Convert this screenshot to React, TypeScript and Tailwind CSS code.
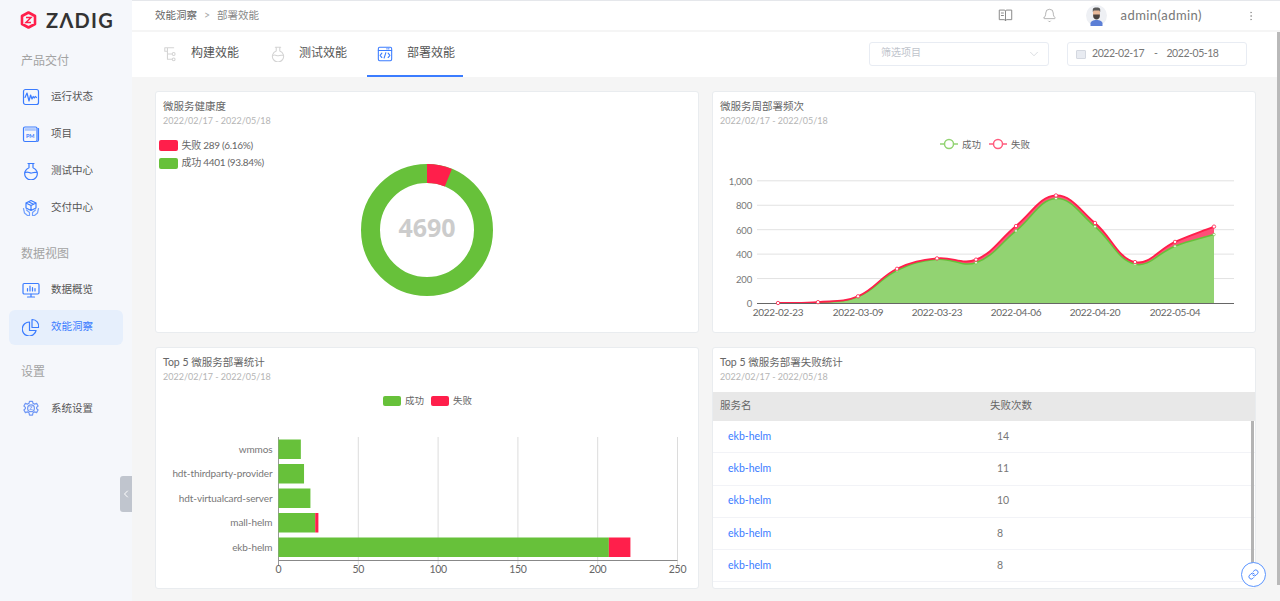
import React from 'react';
import { Bell, ChevronDown, ChevronLeft, Link, MoreVertical } from 'lucide-react';

const GREEN = '#67c13a';
const RED = '#ff1f4b';
const BLUE = '#3b7cff';
const FONT = "Lato,'Noto Sans CJK SC',sans-serif";

const Icon: React.FC<{ children: React.ReactNode; color?: string; size?: number }> = ({ children, color = BLUE, size = 18 }) => (
  <svg width={size} height={size} viewBox="0 0 18 18" fill="none" stroke={color} strokeWidth="1.2" strokeLinecap="round" strokeLinejoin="round">
    {children}
  </svg>
);

const PulseIcon = () => (
  <Icon>
    <rect x="1.5" y="1.5" width="15" height="15" rx="2" />
    <path d="M3 9.5 5 5l2 8 1.6-6 1.4 4 1.2-2.5 1 1.5 1-1.5 1.3 1" />
  </Icon>
);

const ProjectIcon = () => (
  <Icon>
    <path d="M16 3.5h.5V15a1.5 1.5 0 0 1-1.5 1.5" />
    <rect x="1.5" y="2" width="13.5" height="14.5" rx="1.5" />
    <rect x="2.8" y="3.2" width="11" height="2.6" fill={BLUE} fillOpacity="0.4" stroke="none" />
    <text x="8.2" y="13" textAnchor="middle" fontSize="5.5" fontWeight="700" fill={BLUE} stroke="none">PM</text>
  </Icon>
);

const FlaskIcon = ({ color = BLUE, size = 18 }: { color?: string; size?: number }) => (
  <Icon color={color} size={size}>
    <path d="M6 1.5h6M7 1.5v4.2a6.3 6.3 0 1 0 4 0V1.5" />
    <path d="M3.5 10.5c2.5-1.5 4 1 6 .5s3-1 5-.5" />
  </Icon>
);

const DeliveryIcon = () => (
  <Icon>
    <path d="M9 1.5 14 4v5l-5 2.5L4 9V4zM4 4l5 2.5L14 4M9 6.5v5M6.5 2.8l5 2.5" />
    <path d="M1.5 9.5 2.5 14l3 2.5h2v-3L4.5 11M16.5 9.5l-1 4.5-3 2.5h-2v-3l3-2.5" opacity="0.7" />
  </Icon>
);

const MonitorIcon = () => (
  <Icon>
    <rect x="1" y="2.5" width="16" height="10.5" rx="1.2" />
    <path d="M9 13v2.5M5.5 16h7M5.5 10V7.5M8 10V5M10.5 10V6.5M13 10V7.5" />
  </Icon>
);

const PieIcon = () => (
  <Icon>
    <path d="M7.5 4a7 7 0 1 0 6.6 8.5H7.5z" />
    <path d="M10 1.5a6.5 6.5 0 0 1 6.5 8H10z" />
  </Icon>
);

const GearIcon = () => (
  <Icon color="#6f97f5">
    <path d="M7.5 1.3h3l.5 2 1.6.8 2-.7 1.5 2.6-1.5 1.4v1.2l1.5 1.4-1.5 2.6-2-.7-1.6.8-.5 2.4h-3l-.5-2.4-1.6-.8-2 .7-1.5-2.6L3.4 8.6V7.4L1.9 6l1.5-2.6 2 .7L7 3.3z" />
    <circle cx="9" cy="8.2" r="3.4" />
    <path d="M7.8 6.8h2.4L7.8 9.6h2.4" strokeWidth="0.8" />
  </Icon>
);

const BuildIcon = () => (
  <Icon color="#d4d4d4" size={16}>
    <path d="M2 2h10M2 2v4h3M5 2v13h5M5 9h5" />
    <circle cx="12" cy="9" r="1.6" />
    <circle cx="12" cy="15" r="1.6" />
  </Icon>
);

const CodeIcon = () => (
  <Icon size={16}>
    <rect x="1.5" y="1.5" width="15" height="15" rx="1.5" />
    <path d="M1.5 5h15" />
    <path d="M5.5 8 3.5 10.5l2 2.5M12.5 8l2 2.5-2 2.5M10 7.5 8 13.5" />
    <path d="M11 3.2h.5M13 3.2h.5" />
  </Icon>
);

const BookIcon = () => (
  <Icon color="#8a8a8a" size={15}>
    <path d="M2 2.5h5.5c.9 0 1.5.6 1.5 1.5v11.5c0-.9-.6-1.5-1.5-1.5H2zM16 2.5h-5.5C9.6 2.5 9 3.1 9 4v11.5c0-.9.6-1.5 1.5-1.5H16z" />
    <path d="M4 6h2.5M4 9h2.5" />
  </Icon>
);

const Avatar = () => (
  <svg width="21" height="21" viewBox="0 0 21 21">
    <circle cx="10.5" cy="10.5" r="10.5" fill="#eef0f4" />
    <path d="M4.5 21v-2.5c0-2 2.5-3.5 6-3.5s6 1.5 6 3.5V21z" fill="#5c7fd6" />
    <rect x="7" y="4" width="7" height="9" rx="3" fill="#e8b99a" />
    <path d="M6.8 7V4.5c0-1.500 1.500-2 3.700-2s3.700.5 3.700 2V7l-1-1.500H7.800z" fill="#5a5a5a" />
    <path d="M7.200 9.500h6.600v1.500c0 2-1.500 3.500-3.300 3.500S7.200 13 7.200 11z" fill="#4a4340" />
  </svg>
);

const ZadigLogo = () => (
  <svg width="17" height="18" viewBox="0 0 17 18" fill="none">
    <path d="M8.500 1.500 15 5v8l-6.500 3.500L2 13V5z" stroke={RED} strokeWidth="2.600" strokeLinejoin="round" />
    <path d="M6 6.500h5L6 11.500h5" stroke={RED} strokeWidth="1.500" />
  </svg>
);

// chart.js style bezier through the points, tension 0.4
const smoothPath = (pts: number[][]) => {
  let d = `M${pts[0][0]} ${pts[0][1]}`;
  const ctrl = (i: number) => {
    const p0 = pts[Math.max(i - 1, 0)], p1 = pts[i], p2 = pts[Math.min(i + 1, pts.length - 1)];
    const d01 = Math.hypot(p1[0] - p0[0], p1[1] - p0[1]);
    const d12 = Math.hypot(p2[0] - p1[0], p2[1] - p1[1]);
    const sum = d01 + d12 || 1;
    const fa = (0.4 * d01) / sum, fb = (0.4 * d12) / sum;
    return {
      prev: [p1[0] - fa * (p2[0] - p0[0]), p1[1] - fa * (p2[1] - p0[1])],
      next: [p1[0] + fb * (p2[0] - p0[0]), p1[1] + fb * (p2[1] - p0[1])],
    };
  };
  for (let i = 0; i < pts.length - 1; i++) {
    const a = ctrl(i).next, b = ctrl(i + 1).prev;
    d += ` C${a[0]} ${a[1]} ${b[0]} ${b[1]} ${pts[i + 1][0]} ${pts[i + 1][1]}`;
  }
  return d;
};

const DonutChart = () => {
  const cx = 271, cy = 101, r = 56.5;
  const a = (0.0616 * 2 * Math.PI);
  const ex = cx + r * Math.sin(a), ey = cy - r * Math.cos(a);
  return (
    <svg width="542" height="203" className="block">
      <rect x="3" y="11" width="19" height="11" rx="2" fill={RED} />
      <text x="25.5" y="20" fontSize="10" letterSpacing="-0.3" fill="#666">失败 289 (6.16%)</text>
      <rect x="3" y="29" width="19" height="11" rx="2" fill={GREEN} />
      <text x="25.5" y="37" fontSize="10" letterSpacing="-0.3" fill="#666">成功 4401 (93.84%)</text>
      <circle cx={cx} cy={cy} r={r} fill="none" stroke={GREEN} strokeWidth="19" />
      <path d={`M${cx} ${cy - r} A${r} ${r} 0 0 1 ${ex} ${ey}`} fill="none" stroke={RED} strokeWidth="19" />
      <text x={cx} y={cy + 7} textAnchor="middle" fontSize="25" fontWeight="700" fontFamily="'Open Sans',sans-serif" fill="#cccccc">4690</text>
    </svg>
  );
};

const lineX = [65, 105, 145, 184, 224, 263, 303, 343, 382, 422, 462, 501];
const redVals = [0, 7, 55, 280, 365, 355, 630, 880, 655, 335, 500, 625];
const greenVals = [0, 5, 50, 265, 358, 330, 590, 855, 625, 318, 465, 560];
const yOf = (v: number) => 174 - v * 0.1222;

const LineChart = () => {
  const red = lineX.map((x, i) => [x, yOf(redVals[i])]);
  const green = lineX.map((x, i) => [x, yOf(greenVals[i])]);
  const redLine = smoothPath(red);
  const greenLine = smoothPath(green);
  return (
    <svg width="542" height="203" className="block">
      <path d="M227 15h18" stroke="#92d372" strokeWidth="1.5" />
      <circle cx="236" cy="15" r="4.5" fill="#fff" stroke="#92d372" strokeWidth="1.5" />
      <text x="249" y="18.5" fontSize="9.5" fill="#666">成功</text>
      <path d="M276 15h18" stroke="#ff5c7e" strokeWidth="1.5" />
      <circle cx="285" cy="15" r="4.5" fill="#fff" stroke="#ff5c7e" strokeWidth="1.5" />
      <text x="298" y="18.5" fontSize="9.5" fill="#666">失败</text>
      {[0, 200, 400, 600, 800, 1000].map((v) => (
        <g key={v}>
          {v > 0 && <path d={`M44 ${yOf(v)}H521`} stroke="#e2e2e2" strokeWidth="1" />}
          <text x="39" y={yOf(v) + 4} textAnchor="end" fontSize="9.5" letterSpacing="-0.2" fill="#777">{v.toLocaleString('en-US')}</text>
        </g>
      ))}
      <path d={`${redLine} L501 174 L65 174 Z`} fill="#ff5078" />
      <path d={`${greenLine} L501 174 L65 174 Z`} fill="#92d372" />
      <path d={greenLine} fill="none" stroke={GREEN} strokeWidth="1.5" />
      <path d={redLine} fill="none" stroke={RED} strokeWidth="1.8" />
      <path d="M44 174.5H521" stroke="#666" strokeWidth="1" />
      {green.map((p) => <circle key={p[0]} cx={p[0]} cy={p[1]} r="1.3" fill="#fff" stroke={GREEN} strokeWidth="0.6" />)}
      {red.map((p) => <circle key={p[0]} cx={p[0]} cy={p[1]} r="1.7" fill="#fff" stroke={RED} strokeWidth="0.8" />)}
      {[['2022-02-23', 65], ['2022-03-09', 145], ['2022-03-23', 224], ['2022-04-06', 303], ['2022-04-20', 382], ['2022-05-04', 462]].map(([t, x]) => (
        <text key={t} x={x} y="187" textAnchor="middle" fontSize="10" letterSpacing="-0.35" fill="#666">{t}</text>
      ))}
    </svg>
  );
};

const bars: [string, number, number][] = [
  ['wmmos', 14, 0],
  ['hdt-thirdparty-provider', 16, 0],
  ['hdt-virtualcard-server', 20, 0],
  ['mall-helm', 23, 2],
  ['ekb-helm', 207, 13.5],
];

const BarChart = () => {
  const x0 = 122.5, k = 1.596;
  return (
    <svg width="542" height="203" className="block">
      <rect x="227" y="11" width="18" height="10" rx="2" fill={GREEN} />
      <text x="249" y="19" fontSize="9.5" fill="#666">成功</text>
      <rect x="275" y="11" width="18" height="10" rx="2" fill={RED} />
      <text x="297" y="19" fontSize="9.5" fill="#666">失败</text>
      {[0, 50, 100, 150, 200, 250].map((v) => (
        <g key={v}>
          <path d={`M${x0 + v * k} 52V180`} stroke={v === 0 ? '#999' : '#dcdcdc'} strokeWidth="1" />
          <text x={x0 + v * k} y="187" textAnchor="middle" fontSize="10.5" letterSpacing="-0.3" fill="#666" dominantBaseline="middle" dy="-2">{v}</text>
        </g>
      ))}
      {bars.map(([name, ok, fail], i) => {
        const y = 54.5 + i * 24.5;
        return (
          <g key={name}>
            <text x={x0 - 6} y={y + 13} textAnchor="end" fontSize="10" letterSpacing="-0.1" fill="#777">{name}</text>
            <rect x={x0} y={y} width={ok * k} height="19.5" fill={GREEN} />
            {fail > 0 && <rect x={x0 + ok * k} y={y} width={fail * k} height="19.5" fill={RED} />}
          </g>
        );
      })}
      <path d={`M${x0} 175.5H${x0 + 250 * k}`} stroke="#888" strokeWidth="1" />
    </svg>
  );
};

const Card: React.FC<{ title: string; children: React.ReactNode }> = ({ title, children }) => (
  <div className="relative h-[242px] rounded-[3px] border border-[#e9ecef] bg-white overflow-hidden">
    <div className="h-[37px] pl-[7px] pt-[6.5px]">
      <div className="text-[10.5px] leading-[15px] text-[#666]">{title}</div>
      <div className="text-[9px] leading-[14.5px] text-[#b5b5b5]">2022/02/17 - 2022/05/18</div>
    </div>
    {children}
  </div>
);

const failRows = [14, 11, 10, 8, 8];

const FailTable = () => (
  <div className="relative mt-[7px]">
    <div className="flex h-[29px] items-center bg-[#e8e8e8] pb-[1px] text-[10.5px] text-[#666]">
      <div className="w-[277px] pl-[7px]">服务名</div>
      <div>失败次数</div>
    </div>
    {failRows.map((n, i) => (
      <div key={i} className="flex h-[32.3px] items-center border-b border-[#f2f3f7] text-[10.5px]">
        <div className="w-[277px] pl-[15px] text-[#3b7cff]">ekb-helm</div>
        <div className="pl-[7px] text-[#777]">{n}</div>
      </div>
    ))}
    <div className="absolute right-[1px] top-[29px] h-[142px] w-[3px] bg-[#b4b4b4]" />
  </div>
);

const SideLabel: React.FC<{ text: string; className: string }> = ({ text, className }) => (
  <div className={`flex h-[24px] items-center pl-[21px] text-[12px] text-[#a3a3a3] ${className}`}>{text}</div>
);

const SideItem: React.FC<{ icon: React.ReactNode; text: string; active?: boolean }> = ({ icon, text, active }) => (
  <div className={`mx-[9px] flex h-[35px] items-center gap-[11px] rounded-[6px] pl-[13px] text-[10.5px] ${active ? 'bg-[#e6effc] text-[#3b7cff]' : 'text-[#555]'}`}>
    {icon}
    <span>{text}</span>
  </div>
);

const Tab: React.FC<{ icon: React.ReactNode; text: string; gap: string; active?: boolean }> = ({ icon, text, gap, active }) => (
  <div className={`flex h-[45px] w-[96px] items-center border-b-2 pl-[10px] text-[12px] text-[#555] ${gap} ${active ? 'border-[#3b7cff]' : 'border-transparent'}`}>
    {icon}
    <span className="pb-[2px]">{text}</span>
  </div>
);

export default function App() {
  return (
    <div className="relative flex h-[601px] w-[1280px] overflow-hidden bg-[#f5f5f5]" style={{ fontFamily: FONT }}>
      {/* Sidebar */}
      <aside className="w-[132px] shrink-0 bg-[#f5f7fb]">
        <div className="flex h-[40px] items-center gap-[9px] pl-[20px]">
          <ZadigLogo />
          <span className="text-[20px] font-bold tracking-[1.3px] text-[#333]">ZΛDIG</span>
        </div>
        <SideLabel text="产品交付" className="mt-[9px]" />
        <div className="mt-[6.5px] flex flex-col gap-[2px]">
          <SideItem icon={<PulseIcon />} text="运行状态" />
          <SideItem icon={<ProjectIcon />} text="项目" />
          <SideItem icon={<FlaskIcon />} text="测试中心" />
          <SideItem icon={<DeliveryIcon />} text="交付中心" />
        </div>
        <SideLabel text="数据视图" className="mt-[16.5px]" />
        <div className="mt-[6.5px] flex flex-col gap-[2px]">
          <SideItem icon={<MonitorIcon />} text="数据概览" />
          <SideItem icon={<PieIcon />} text="效能洞察" active />
        </div>
        <SideLabel text="设置" className="mt-[15.5px]" />
        <div className="mt-[7.5px]">
          <SideItem icon={<GearIcon />} text="系统设置" />
        </div>
      </aside>

      {/* Main */}
      <main className="flex min-w-0 flex-1 flex-col">
        <header className="flex h-[30px] items-center border-t border-[#e5e7eb] bg-white pl-[23px] pr-[23px] text-[10.5px]">
          <span className="text-[#666]">效能洞察</span>
          <span className="mx-[7px] text-[#aaa]">&gt;</span>
          <span className="text-[#888]">部署效能</span>
          <div className="ml-auto flex items-center">
            <BookIcon />
            <Bell className="ml-[29px] h-[15px] w-[15px] text-[#8a8a8a]" strokeWidth={1} />
            <div className="ml-[29px]"><Avatar /></div>
            <span className="ml-[14px] text-[13px] tracking-[0.45px] text-[#777]">admin(admin)</span>
            <MoreVertical className="ml-[43px] h-[12px] w-[12px] text-[#999]" strokeWidth={1.5} />
          </div>
        </header>

        <div className="mt-[2px] flex h-[45px] items-center bg-white pl-[21px] pr-[33px]">
          <div className="flex gap-[11px]">
            <Tab icon={<BuildIcon />} text="构建效能" gap="gap-[12px]" />
            <Tab icon={<FlaskIcon color="#d4d4d4" size={16} />} text="测试效能" gap="gap-[13px]" />
            <Tab icon={<CodeIcon />} text="部署效能" gap="gap-[14px]" active />
          </div>
          <div className="ml-auto flex gap-[18px] pb-[1px]">
            <div className="flex h-[24px] w-[180px] items-center justify-between rounded-[3px] border border-[#e8ecf3] pl-[11px] pr-[7px] text-[10px] text-[#c0c4cc]">
              <span className="pb-[3px]">筛选项目</span>
              <ChevronDown className="h-[14px] w-[14px]" strokeWidth={1} />
            </div>
            <div className="flex h-[24px] w-[180px] items-center rounded-[3px] border border-[#e8ecf3] pl-[8px] text-[10.5px] tracking-[-0.45px] text-[#777]">
              <div className="h-[9px] w-[10px] rounded-[1px] border border-[#d4d8e0] bg-[#e8ebf1]" />
              <span className="ml-[6px]">2022-02-17</span>
              <span className="ml-[10px]">-</span>
              <span className="ml-[9px]">2022-05-18</span>
            </div>
          </div>
        </div>

        <div className="grid grid-cols-2 gap-x-[13px] gap-y-[14px] pl-[23px] pr-[24px] pt-[14px]">
          <Card title="微服务健康度"><DonutChart /></Card>
          <Card title="微服务周部署频次"><LineChart /></Card>
          <Card title="Top 5 微服务部署统计"><BarChart /></Card>
          <Card title="Top 5 微服务部署失败统计"><FailTable /></Card>
        </div>
      </main>

      {/* Sidebar collapse handle */}
      <div className="absolute left-[120px] top-[476px] flex h-[36px] w-[12px] items-center justify-center rounded-l-[3px] bg-[#c0c5ce] text-white">
        <ChevronLeft className="h-[12px] w-[12px]" strokeWidth={2} />
      </div>

      {/* Page scrollbar */}
      <div className="absolute right-0 top-[32px] h-[553px] w-[3px] bg-[#b9b9b9]" />

      {/* Floating link button */}
      <div className="absolute left-[1241px] top-[562px] flex h-[25px] w-[25px] items-center justify-center rounded-full border border-[#5b95ff] bg-white text-[#3b7cff]">
        <Link className="h-[11px] w-[11px]" strokeWidth={2} />
      </div>
    </div>
  );
}
